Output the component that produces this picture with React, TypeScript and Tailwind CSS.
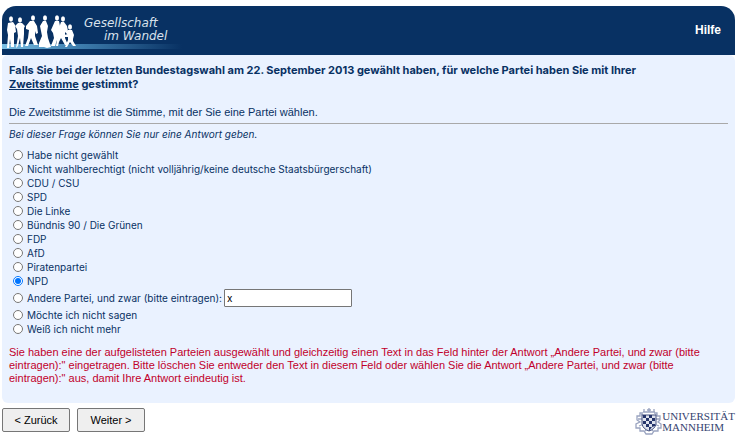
import { useState } from "react";

const before = [
  "Habe nicht gewählt",
  "Nicht wahlberechtigt (nicht volljährig/keine deutsche Staatsbürgerschaft)",
  "CDU / CSU",
  "SPD",
  "Die Linke",
  "Bündnis 90 / Die Grünen",
  "FDP",
  "AfD",
  "Piratenpartei",
  "NPD",
];
const after = ["Möchte ich nicht sagen", "Weiß ich nicht mehr"];
const other = "Andere Partei, und zwar (bitte eintragen):";

type OptionProps = { label: string; checked: boolean; onSelect: () => void };

function Option({ label, checked, onSelect }: OptionProps) {
  return (
    <label className="flex h-full items-center gap-1">
      <input type="radio" name="partei" checked={checked} onChange={onSelect} className="m-0 size-[10px] shrink-0" />
      <span>{label}</span>
    </label>
  );
}

function Person({ d, x, y }: { d: string; x: number; y: number }) {
  return (
    <g fill="#fff">
      <ellipse cx={x} cy={y} rx="2" ry="2.7" />
      <path d={d} />
    </g>
  );
}

function Logo() {
  return (
    <svg viewBox="0 0 190 49" className="h-[49px] w-[190px]" role="img" aria-label="Gesellschaft im Wandel">
      <defs>
        <linearGradient id="band" x1="0" x2="1">
          <stop offset="0" stopColor="#7cc0e4" />
          <stop offset="0.35" stopColor="#4688b8" />
          <stop offset="1" stopColor="#083163" />
        </linearGradient>
      </defs>
      <rect x="0" y="38" width="180" height="5" fill="url(#band)" />
      <Person x={9} y={13} d="M6 17l5-1 2 3 1 7-2 1 0 6 0 8h-3l-1-8-1 9H5l1-13-1-5z" />
      <Person x={18} y={14} d="M16 17l4 0 3 3-1 2 0 6-1 13h-2l-1-9-2 8-2 2 2-12-1-7-2-3z" />
      <Person x={31} y={12} d="M28 15l4 0 3 5 1 7-2 1-1-3 0 5 3 9h-4l-3-7-3 8h-3l3-8 1-8-3-1 0-3z" />
      <Person x={43} y={12} d="M41 15h3l2 5-1 6 1 6 3 9-4 1-3-1-5 0 0-4 3-7-1-5-1-5z" />
      <Person x={55} y={12} d="M53 15l4 0 1 5 0 7-3 7-2 6h-4l3-8-1-5-2-3z" />
      <Person x={61} y={13} d="M59 16l3 0 3 4 1 5 2 4-1 1-4-4 0 6 3 7h-3l-4-7-2 4-1 4h-2l1-7 1-8z" />
      <Person x={68} y={21} d="M66 24h4l2 5-1 4 0 2 3 5h-3l-3-4-3 5h-2l3-7v-3l-4 0 0-2 4-1z" />
      <g fill="#d8e1ec" fontFamily="'DejaVu Sans', sans-serif" fontSize="12" fontStyle="italic">
        <text x="82" y="21">Gesellschaft</text>
        <text x="102" y="34">im Wandel</text>
      </g>
    </svg>
  );
}

function University() {
  return (
    <div className="flex h-[28px] items-center">
      <svg viewBox="0 0 27 28" className="h-[28px] w-[27px]" aria-hidden="true">
        <g fill="none" stroke="#9aa4c0" strokeWidth="1.3">
          <path d="M8 5H5v3H2v4l3 2-4 2v4h4v3h4l2 3h6l2-3h4v-3h3v-4l-3-2 2-2V8h-3V5h-3" />
          <path d="M6 6l4 3M22 6l-4 3M4 18l5-2M24 18l-5-2M10 23l2-2M18 23l-2-2M3 11h5M25 11h-5" />
          <path d="M9 1v3M14 0v4M19 1v3M8 4h12M12 2h4" />
        </g>
        <path d="M7 7h14v9q-1 5-7 7-6-2-7-7z" fill="#dfe3ed" stroke="#44517f" strokeWidth="1" />
        <path d="M8 7h3v3H8zM14 7h3v3h-3zM11 10h3v3h-3zM17 10h3v3h-3zM8 13h3v3H8zM14 13h3v3h-3zM11 16h3v3h-3zM17 16h3v2l-3 1zM14 19h3l-3 4z" fill="#26356b" />
      </svg>
      <p className="font-['Liberation_Serif',serif] text-[11px] leading-[11px] text-[#35436f]">
        UNIVERSITÄT
        <br />
        MANNHEIM
      </p>
    </div>
  );
}

export default function App() {
  const [choice, setChoice] = useState("NPD");
  const [text, setText] = useState("x");
  const button =
    "h-6 w-[68px] rounded-[2px] border border-[#767676] bg-[#efefef] text-[11px] text-black";

  return (
    <main className="bg-white pt-[6px] pr-[11px] pl-[2px] font-['Liberation_Sans',Arial,sans-serif] text-[#083163]">
      <header className="flex h-[49px] items-start justify-between overflow-hidden rounded-t-[14px] bg-[#083163]">
        <Logo />
        <a href="#hilfe" className="pt-4 pr-[14px] text-[12px] leading-4 font-bold text-white">Hilfe</a>
      </header>

      <form onSubmit={(e) => e.preventDefault()}>
        <section className="rounded-[6px] bg-[#eaf2ff] px-[7px] pt-2 pb-[18px]">
          <h1 id="frage" className="font-[Inter,sans-serif] text-[11px] leading-[14px] font-bold">
            Falls Sie bei der letzten Bundestagswahl am 22. September 2013 gewählt haben, für welche Partei haben Sie mit Ihrer{" "}
            <br />
            <u>Zweitstimme</u> gestimmt?
          </h1>
          <p className="mt-[14px] border-b border-[#a9a9a9] pb-1 text-[11px] leading-[14px]">
            Die Zweitstimme ist die Stimme, mit der Sie eine Partei wählen.
          </p>
          <p className="mt-[3px] font-[Inter,sans-serif] text-[10px] leading-[14px] italic">
            Bei dieser Frage können Sie nur eine Antwort geben.
          </p>

          <fieldset aria-labelledby="frage" className="mt-[7px] pl-1 font-[Inter,sans-serif] text-[10px] leading-[14px]">
            {before.map((label) => (
              <div key={label} className="h-[14px]">
                <Option label={label} checked={choice === label} onSelect={() => setChoice(label)} />
              </div>
            ))}
            <div className="flex h-5 items-center gap-[2px]">
              <Option label={other} checked={choice === other} onSelect={() => setChoice(other)} />
              <input
                type="text"
                aria-label={other}
                value={text}
                onChange={(e) => setText(e.target.value)}
                className="h-[18px] w-32 rounded-[1px] border border-[#767676] bg-white px-[2px] text-[10px] text-black"
              />
            </div>
            {after.map((label) => (
              <div key={label} className="h-[14px]">
                <Option label={label} checked={choice === label} onSelect={() => setChoice(label)} />
              </div>
            ))}
          </fieldset>

          <p role="alert" className="mt-[10px] text-[11px] leading-[13px] text-[#c1002b]">
            Sie haben eine der aufgelisteten Parteien ausgewählt und gleichzeitig einen Text in das Feld hinter der Antwort „Andere Partei, und zwar (bitte eintragen):" eingetragen. Bitte löschen Sie entweder den Text in diesem Feld oder wählen Sie die Antwort „Andere Partei, und zwar (bitte eintragen):" aus, damit Ihre Antwort eindeutig ist.
          </p>
        </section>

        <footer className="flex items-start justify-between pt-[5px]">
          <div className="flex gap-[7px]">
            <button type="button" className={button}>&lt; Zurück</button>
            <button type="submit" className={button}>Weiter &gt;</button>
          </div>
          <University />
        </footer>
      </form>
    </main>
  );
}
